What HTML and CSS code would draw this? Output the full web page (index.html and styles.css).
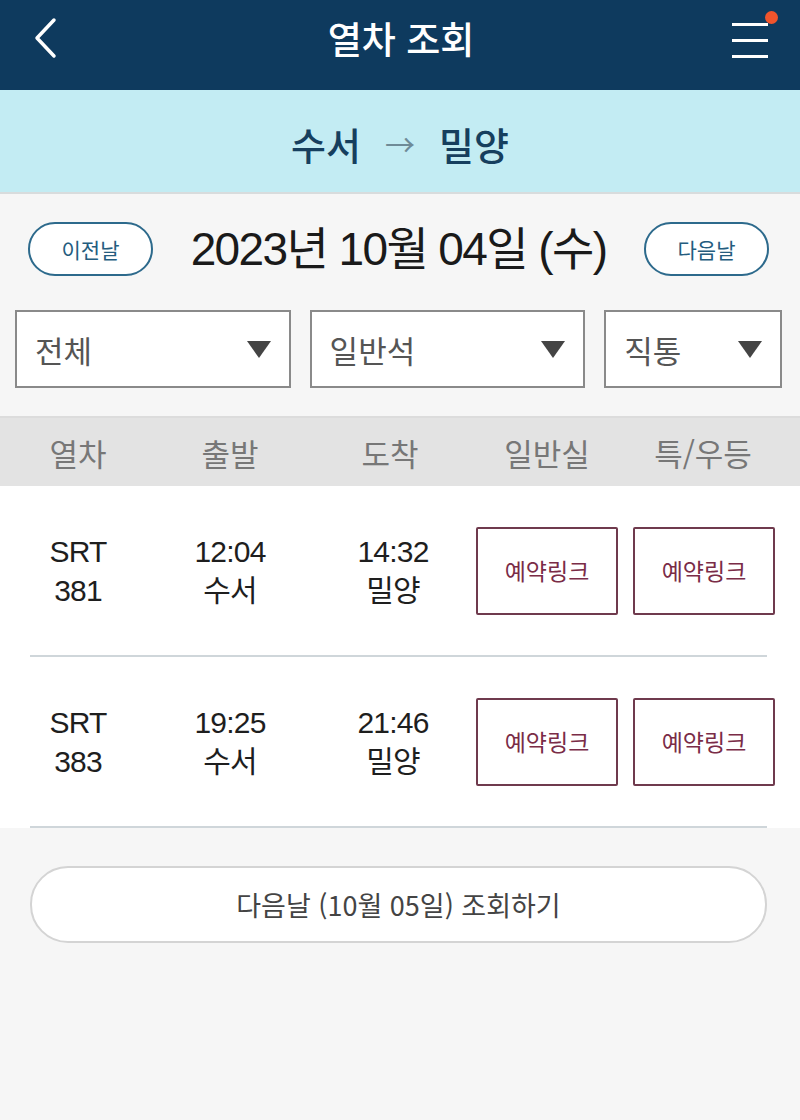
FILE: index.html
```html
<!DOCTYPE html>
<html lang="ko">
<head>
    <meta charset="UTF-8">
    <meta name="viewport" content="width=device-width, initial-scale=1.0">
    <title>열차 조회</title>
    <link rel="stylesheet" href="styles.css">
</head>
<body>
    <header class="topbar">
        <svg class="back" width="30" height="44" viewBox="0 0 30 44">
            <polyline points="22,4 5,22 22,40" fill="none" stroke="#fff" stroke-width="3.5" stroke-linecap="round" stroke-linejoin="round"/>
        </svg>
        <h1>열차 조회</h1>
        <div class="menu">
            <span></span><span></span><span></span>
            <i class="dot"></i>
        </div>
    </header>

    <div class="route">수서 <span class="arrow">&rarr;</span> 밀양</div>

    <section class="search">
        <div class="date-row">
            <button class="pill">이전날</button>
            <div class="date">2023년 10월 04일 (수)</div>
            <button class="pill">다음날</button>
        </div>
        <div class="filters">
            <div class="select wide">전체 <b class="tri"></b></div>
            <div class="select wide">일반석 <b class="tri"></b></div>
            <div class="select narrow">직통 <b class="tri"></b></div>
        </div>
    </section>

    <div class="thead">
        <div>열차</div>
        <div>출발</div>
        <div>도착</div>
        <div class="cls">일반실</div>
        <div>특/우등</div>
    </div>

    <div class="list">
        <div class="row">
            <div>SRT<br>381</div>
            <div>12:04<br>수서</div>
            <div>14:32<br>밀양</div>
            <a class="book">예약링크</a>
            <a class="book">예약링크</a>
        </div>
        <div class="row">
            <div>SRT<br>383</div>
            <div>19:25<br>수서</div>
            <div>21:46<br>밀양</div>
            <a class="book">예약링크</a>
            <a class="book">예약링크</a>
        </div>
    </div>

    <div class="more">
        <button class="next-day">다음날 (10월 05일) 조회하기</button>
    </div>
</body>
</html>
```

FILE: styles.css
```css
body {
    margin: 0;
    background: #f6f6f6;
    font-family: 'Liberation Sans', 'Noto Sans CJK KR', sans-serif;
    color: #222;
}

.topbar {
    height: 90px;
    background: #0e3a5e;
    display: flex;
    align-items: center;
    justify-content: space-between;
    padding: 0 30px 14px 32px;
    box-sizing: border-box;
}

.topbar h1 {
    margin: 0 0 0 8px;
    color: #fff;
    font-size: 37px;
    font-weight: 500;
    font-family: 'Noto Sans CJK KR', sans-serif;
}

.back {
    display: block;
}

.menu {
    position: relative;
    width: 36px;
    display: flex;
    flex-direction: column;
    gap: 13px;
    margin-right: 2px;
    margin-top: 4px;
}

.menu span {
    display: block;
    height: 3px;
    background: #fff;
}

.menu .dot {
    position: absolute;
    top: -12px;
    right: -10px;
    width: 13px;
    height: 13px;
    border-radius: 50%;
    background: #f0542c;
}

.route {
    height: 104px;
    background: #c3ecf3;
    display: flex;
    align-items: center;
    justify-content: center;
    gap: 24px;
    font-family: 'Noto Sans CJK KR', sans-serif;
    font-size: 38px;
    font-weight: 500;
    color: #163f5e;
    border-bottom: 2px solid #d8dcdd;
    padding-top: 4px;
    box-sizing: border-box;
}

.route .arrow {
    color: #6f8b97;
    font-weight: 400;
    font-size: 30px;
}

.search {
    padding: 28px 18px 28px 15px;
    border-bottom: 2px solid #dcdcdc;
}

.date-row {
    display: flex;
    align-items: center;
    justify-content: space-between;
    height: 54px;
    padding: 0 13px 0 13px;
}

.pill {
    width: 125px;
    height: 54px;
    border: 2px solid #2d6a8c;
    border-radius: 27px;
    background: #fff;
    color: #245c7e;
    font-family: 'Noto Sans CJK KR', sans-serif;
    font-size: 21px;
}

.date {
    font-size: 46px;
    line-height: 54px;
    letter-spacing: -1.6px;
    color: #1a1a1a;
}

.filters {
    display: flex;
    gap: 19px;
    margin-top: 34px;
}

.select {
    height: 78px;
    border: 2px solid #8a8a8a;
    background: #fff;
    box-sizing: border-box;
    display: flex;
    align-items: center;
    justify-content: space-between;
    padding: 0 18px 0 18px;
    font-family: 'Noto Sans CJK KR', sans-serif;
    font-size: 31px;
    color: #555;
}

.select.wide {
    width: 276px;
}

.select.narrow {
    width: 178px;
}

.tri {
    width: 0;
    height: 0;
    border-left: 12px solid transparent;
    border-right: 12px solid transparent;
    border-top: 17px solid #444;
}

.thead,
.row {
    display: grid;
    align-items: center;
    text-align: center;
}

.thead {
    grid-template-columns: 156px 148px 172px 156px 142px;
    height: 68px;
    background: #e3e3e3;
    font-family: 'Noto Sans CJK KR', sans-serif;
    font-size: 31px;
    color: #777;
}

.thead .cls {
    width: 142px;
}

.list {
    background: #fff;
}

.row {
    grid-template-columns: 96px 208px 118px 181px 142px;
    height: 171px;
    box-sizing: border-box;
    margin: 0 33px 0 30px;
    border-bottom: 2px solid #cfd6da;
    font-size: 30px;
    line-height: 39px;
    color: #1e1e1e;
}

.row > div {
    font-family: 'Liberation Sans', 'Noto Sans CJK KR', sans-serif;
    letter-spacing: -0.8px;
}

.book {
    width: 142px;
    height: 88px;
    box-sizing: border-box;
    border: 2px solid #6f3a4d;
    border-radius: 2px;
    display: flex;
    align-items: center;
    justify-content: center;
    font-family: 'Noto Sans CJK KR', sans-serif;
    font-size: 23px;
    line-height: 1;
    letter-spacing: 0;
    color: #7a2c47;
}

.row > .book:nth-of-type(1) {
    margin-left: 24px;
}

.more {
    padding: 38px 33px 0 30px;
}

.next-day {
    width: 100%;
    height: 77px;
    border: 2px solid #d4d4d4;
    border-radius: 38px;
    background: #fff;
    font-family: 'Noto Sans CJK KR', sans-serif;
    font-size: 27px;
    color: #444;
}
```
